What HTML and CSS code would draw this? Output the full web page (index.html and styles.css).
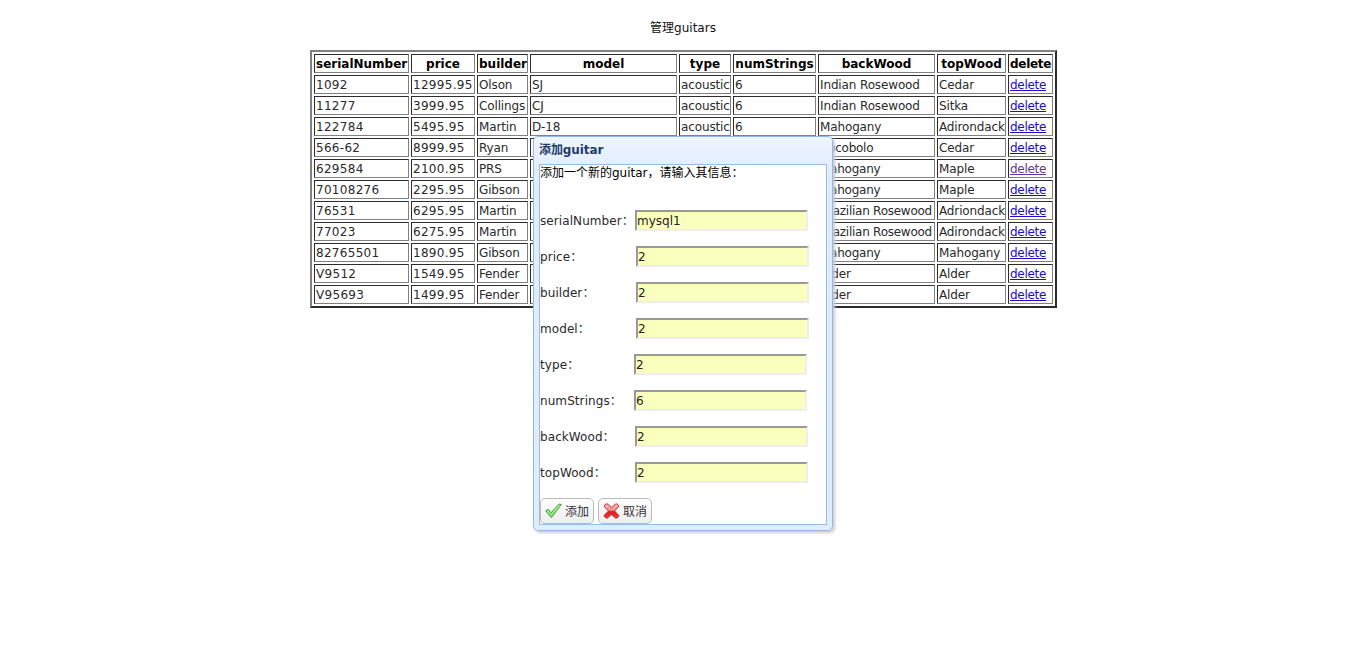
FILE: index.html
```html
<!DOCTYPE html>
<html lang="zh">
<head>
<meta charset="utf-8">
<title>管理guitars</title>
<link rel="stylesheet" href="styles.css">
</head>
<body>
<h1 class="page-title">管理guitars</h1>
<table class="guitars">
<colgroup><col class="c-serial"><col class="c-price"><col class="c-builder"><col class="c-model"><col class="c-type"><col class="c-strings"><col class="c-back"><col class="c-top"><col class="c-delete"></colgroup>
<tr><th>serialNumber</th><th>price</th><th>builder</th><th>model</th><th>type</th><th>numStrings</th><th>backWood</th><th>topWood</th><th>delete</th></tr>
<tr><td>1092</td><td>12995.95</td><td>Olson</td><td>SJ</td><td>acoustic</td><td>6</td><td>Indian Rosewood</td><td>Cedar</td><td><a href="#">delete</a></td></tr>
<tr><td>11277</td><td>3999.95</td><td>Collings</td><td>CJ</td><td>acoustic</td><td>6</td><td>Indian Rosewood</td><td>Sitka</td><td><a href="#">delete</a></td></tr>
<tr><td>122784</td><td>5495.95</td><td>Martin</td><td>D-18</td><td>acoustic</td><td>6</td><td>Mahogany</td><td>Adirondack</td><td><a href="#">delete</a></td></tr>
<tr><td>566-62</td><td>8999.95</td><td>Ryan</td><td></td><td></td><td></td><td class="tight">Cocobolo</td><td>Cedar</td><td><a href="#">delete</a></td></tr>
<tr><td>629584</td><td>2100.95</td><td>PRS</td><td></td><td></td><td></td><td class="tight">Mahogany</td><td>Maple</td><td><a class="visited" href="#">delete</a></td></tr>
<tr><td>70108276</td><td>2295.95</td><td>Gibson</td><td></td><td></td><td></td><td class="tight">Mahogany</td><td>Maple</td><td><a href="#">delete</a></td></tr>
<tr><td>76531</td><td>6295.95</td><td>Martin</td><td></td><td></td><td></td><td class="tight">Brazilian Rosewood</td><td>Adriondack</td><td><a href="#">delete</a></td></tr>
<tr><td>77023</td><td>6275.95</td><td>Martin</td><td></td><td></td><td></td><td class="tight">Brazilian Rosewood</td><td>Adirondack</td><td><a href="#">delete</a></td></tr>
<tr><td>82765501</td><td>1890.95</td><td>Gibson</td><td></td><td></td><td></td><td class="tight">Mahogany</td><td>Mahogany</td><td><a href="#">delete</a></td></tr>
<tr><td>V9512</td><td>1549.95</td><td>Fender</td><td></td><td></td><td></td><td>Alder</td><td>Alder</td><td><a href="#">delete</a></td></tr>
<tr><td>V95693</td><td>1499.95</td><td>Fender</td><td></td><td></td><td></td><td>Alder</td><td>Alder</td><td><a href="#">delete</a></td></tr>
</table>

<div class="window">
  <div class="window-title">添加guitar</div>
  <form class="window-body">
    <p class="intro">添加一个新的guitar，请输入其信息：</p>
    <div class="field"><label class="w95">serialNumber：</label><input value="mysql1"></div>
    <div class="field"><label class="w96">price：</label><input value="2"></div>
    <div class="field"><label class="w96">builder：</label><input value="2"></div>
    <div class="field"><label class="w96">model：</label><input value="2"></div>
    <div class="field"><label class="w94">type：</label><input value="2"></div>
    <div class="field"><label class="w94">numStrings：</label><input value="6"></div>
    <div class="field"><label class="w95">backWood：</label><input value="2"></div>
    <div class="field"><label class="w95">topWood：</label><input value="2"></div>
    <div class="actions">
      <a class="btn"><svg width="17" height="16" viewBox="0 0 17 16"><defs><linearGradient id="g" x1="0" y1="0" x2="0" y2="1"><stop offset="0" stop-color="#c4f2b4"/><stop offset="1" stop-color="#7ee268"/></linearGradient></defs><path d="M.7 7.800 3.400 6.300 6 9.800 14 1.100l2.300.3L6.400 14.600z" fill="url(#g)" stroke="#3c9f30" stroke-width="1" stroke-linejoin="round"/></svg><span>添加</span></a>
      <a class="btn"><svg width="17" height="16" viewBox="0 0 17 16"><defs><linearGradient id="r" x1="0" y1="0" x2="0" y2="1"><stop offset="0" stop-color="#fbc4c4"/><stop offset=".46" stop-color="#f08a8a"/><stop offset=".54" stop-color="#dc1c1c"/><stop offset="1" stop-color="#f03a3a"/></linearGradient></defs><path d="M4 .7 8.500 4.500 13 .7q2 .4 2.900 2.500L11.500 8l4.400 4.600q-.8 2.200-3 2.700L8.500 11.500 4 15.300q-2.200-.5-3-2.700L5.500 8 1 3.200Q2 1.100 4 .7z" fill="url(#r)" stroke="#c8242c" stroke-width="1" stroke-linejoin="round"/></svg><span>取消</span></a>
    </div>
  </form>
</div>
</body>
</html>
```
FILE: styles.css
```css
* { box-sizing: border-box; }
body {
  margin: 0;
  height: 666px;
  overflow: hidden;
  background: #fff;
  color: #2a2a2a;
  font: 12px/15px "DejaVu Sans", "Noto Sans CJK SC", sans-serif;
}
.page-title {
  margin: 0;
  padding: 21px 0 14px;
  font-size: 12px;
  font-weight: normal;
  text-align: center;
  color: #111;
}
.guitars {
  table-layout: fixed;
  width: 747px;
  margin: 0 0 0 310px;
  border: 2px solid;
  border-color: #808080 #2c2c2c #2c2c2c #808080;
  border-collapse: separate;
  border-spacing: 2px;
}
th, td {
  height: 19px;
  padding: 2px 1px 0;
  border: 1px solid;
  border-color: #2c2c2c #808080 #808080 #2c2c2c;
  white-space: nowrap;
  text-align: left;
}
th { text-align: center; color: #000; letter-spacing: 0; }
th:last-child { letter-spacing: -0.3px; }
td { letter-spacing: -0.13px; }
td:nth-child(1), td:nth-child(2) { letter-spacing: 0.3px; }
td.tight { letter-spacing: -0.25px; }
.c-serial { width: 95px; }
.c-price { width: 64px; }
.c-builder { width: 51px; }
.c-model { width: 147px; }
.c-type { width: 52px; }
.c-strings { width: 83px; }
.c-back { width: 117px; }
.c-top { width: 69px; }
.c-delete { width: 45px; }
td a { color: #1a0dcc; letter-spacing: -0.3px; }
td a.visited { color: #663399; }

.window {
  position: absolute;
  left: 533px;
  top: 136px;
  width: 300px;
  height: 395px;
  padding: 5px;
  border: 1px solid #95b8e7;
  border-radius: 5px;
  background: linear-gradient(#eff5ff 0, #e0ecff 36px);
  box-shadow: 2px 2px 3px #ccc;
}
.window-title {
  height: 22px;
  line-height: 16px;
  font-weight: bold;
  letter-spacing: -0.1px;
  color: #243a68;
}
.window-body {
  display: flex;
  flex-direction: column;
  width: 288px;
  height: 361px;
  border: 1px solid #99bbe8;
  background: #fff;
}
.intro { margin: 1px 0 29px; color: #000; white-space: nowrap; }
.field { display: flex; height: 21px; margin-bottom: 15px; }
.field label { padding-top: 1px; line-height: 21px; letter-spacing: 0.08px; white-space: nowrap; }
.w94 { width: 94px; }
.w95 { width: 95px; }
.w96 { width: 96px; }
.field input {
  width: 173px;
  height: 21px;
  padding: 0;
  border: 2px solid;
  border-color: #999 #eee #eee #999;
  border-radius: 0;
  background: #faffbd;
  color: #222;
  font: inherit;
}
.actions { display: flex; gap: 4px; }
.btn {
  display: flex;
  align-items: center;
  gap: 3px;
  width: 54px;
  height: 26px;
  padding-left: 4px;
  border: 1px solid #bbb;
  border-radius: 5px;
  background: linear-gradient(#fff, #eee);
  color: #333;
}
.btn span { padding-top: 2px; }
```
